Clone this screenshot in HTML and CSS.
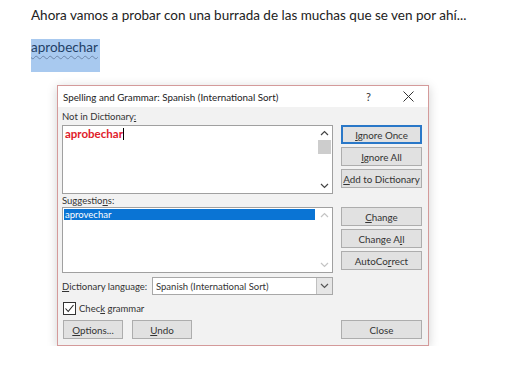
FILE: index.html
```html
<!DOCTYPE html>
<html lang="es">
<head>
    <meta charset="UTF-8">
    <title>Spelling and Grammar</title>
    <link rel="stylesheet" href="styles.css">
</head>
<body>
    <div class="doc">
        <p class="line">Ahora vamos a probar con una burrada de las muchas que se ven por ahí...</p>
        <p class="selected"><span class="misspelled">aprobechar</span></p>
    </div>

    <div class="dialog">
        <div class="titlebar">
            <span class="title">Spelling and Grammar: Spanish (International Sort)</span>
            <span class="help">?</span>
            <span class="close-x">
                <svg width="11" height="11" viewBox="0 0 11 11"><path d="M0.5 0.5 L10.5 10.5 M10.5 0.5 L0.5 10.5" stroke="#333" stroke-width="1" fill="none"/></svg>
            </span>
        </div>

        <div class="body">
            <div class="label first">Not in Dictionary<u>:</u></div>
            <div></div>

            <div class="textbox">
                <div class="content"><span class="bad">aprobechar</span><span class="caret"></span></div>
                <div class="scroll">
                    <svg class="arrow" width="9" height="6" viewBox="0 0 9 6"><path d="M1 5 L4.5 1.5 L8 5" stroke="#444" stroke-width="1.2" fill="none"/></svg>
                    <div class="thumb"></div>
                    <div class="track"></div>
                    <svg class="arrow" width="9" height="6" viewBox="0 0 9 6"><path d="M1 1 L4.5 4.5 L8 1" stroke="#444" stroke-width="1.2" fill="none"/></svg>
                </div>
            </div>
            <div class="stack">
                <button class="btn default"><u>I</u>gnore Once</button>
                <button class="btn"><u>I</u>gnore All</button>
                <button class="btn"><u>A</u>dd to Dictionary</button>
            </div>

            <div class="label">Suggestio<u>n</u>s:</div>
            <div></div>

            <div class="listbox">
                <div class="content">
                    <div class="item active">aprovechar</div>
                </div>
                <div class="scroll">
                    <svg class="arrow" width="9" height="6" viewBox="0 0 9 6"><path d="M1 5 L4.5 1.5 L8 5" stroke="#c4c4c4" stroke-width="1.2" fill="none"/></svg>
                    <div class="track"></div>
                    <svg class="arrow" width="9" height="6" viewBox="0 0 9 6"><path d="M1 1 L4.5 4.5 L8 1" stroke="#c4c4c4" stroke-width="1.2" fill="none"/></svg>
                </div>
            </div>
            <div class="stack">
                <button class="btn"><u>C</u>hange</button>
                <button class="btn">Change A<u>l</u>l</button>
                <button class="btn">AutoCo<u>r</u>rect</button>
            </div>

            <div class="langrow">
                <span class="langlabel"><u>D</u>ictionary language:</span>
                <div class="select">
                    <span class="value">Spanish (International Sort)</span>
                    <span class="drop">
                        <svg width="9" height="6" viewBox="0 0 9 6"><path d="M1 1 L4.5 4.5 L8 1" stroke="#555" stroke-width="1.2" fill="none"/></svg>
                    </span>
                </div>
            </div>
            <div></div>

            <div class="checkrow">
                <span class="checkbox">
                    <svg width="11" height="11" viewBox="0 0 11 11"><path d="M1.5 5.5 L4.2 8.5 L9.5 2" stroke="#222" stroke-width="1.1" fill="none"/></svg>
                </span>
                <span>Chec<u>k</u> grammar</span>
            </div>
            <div></div>

            <div class="bottomrow">
                <button class="btn small"><u>O</u>ptions...</button>
                <button class="btn small"><u>U</u>ndo</button>
            </div>
            <div class="stack bottom">
                <button class="btn">Close</button>
            </div>
        </div>
    </div>
</body>
</html>
```

FILE: styles.css
```css
body {
    margin: 0;
    background: #ffffff;
    font-family: Lato, "Open Sans", sans-serif;
}
.doc {
    padding: 6px 0 0 31px;
    font-size: 13.5px;
    color: #222;
}
.doc p {
    margin: 0;
}
.line {
    height: 19px;
    line-height: 19px;
}
.selected {
    margin-top: 14px !important;
    display: inline-block;
    background: #a8c9ef;
    height: 33px;
    width: 69px;
    line-height: 17px;
    white-space: nowrap;
}
.misspelled {
    color: #1f3f66;
    text-decoration: underline wavy #6d86aa;
    text-decoration-thickness: 1px;
    text-underline-offset: 3px;
}

.dialog {
    margin: 13px 0 0 57px;
    width: 370px;
    border: 1px solid #d49a9a;
    background: #f2f2f2;
    box-shadow: 0 2px 10px rgba(0, 0, 0, 0.18);
    font-size: 9.5px;
    color: #333;
    white-space: nowrap;
}
.titlebar {
    height: 21px;
    background: #fff;
    display: flex;
    align-items: center;
    padding-left: 5px;
}
.title {
    flex: 1;
    font-size: 9.8px;
    color: #222;
}
.help {
    width: 37px;
    font-size: 11px;
}
.close-x {
    width: 25px;
    display: flex;
}
.body {
    display: grid;
    grid-template-columns: 271px 81px;
    column-gap: 8px;
    padding: 0 0 6px 4px;
}
.label {
    height: 12px;
    line-height: 12px;
    margin-top: 1px;
    margin-bottom: 0;
}
.label.first {
    margin-top: 4px;
    margin-bottom: 2px;
}
.textbox,
.listbox {
    background: #fff;
    border: 1px solid #a0a0a0;
    display: flex;
}
.textbox {
    height: 67px;
}
.listbox {
    height: 64px;
}
.content {
    flex: 1;
    padding: 1px 2px;
}
.bad {
    color: #e0202a;
    font-weight: bold;
    font-size: 11.5px;
}
.caret {
    display: inline-block;
    width: 1px;
    height: 12px;
    background: #000;
    vertical-align: -2px;
}
.scroll {
    width: 15px;
    display: flex;
    flex-direction: column;
    align-items: center;
    background: #fff;
}
.arrow {
    margin: 4px 0;
}
.thumb {
    width: 13px;
    height: 14px;
    background: #cdcdcd;
}
.track {
    flex: 1;
}
.item {
    height: 11px;
    line-height: 11px;
    margin-left: -1px;
    padding-left: 1px;
}
.item.active {
    background: #0a74d4;
    color: #fff;
}
.stack {
    display: flex;
    flex-direction: column;
    gap: 3px;
}
.btn {
    height: 19px;
    background: #e1e1e1;
    border: 1px solid #adadad;
    font-family: Lato, "Open Sans", sans-serif;
    font-size: 9.8px;
    color: #333;
    padding: 0;
    white-space: nowrap;
}
.btn.default {
    border: 2px solid #2a78c8;
}
.langrow {
    display: flex;
    align-items: center;
    margin-top: 4px;
    height: 18px;
}
.langlabel {
    width: 90px;
}
.select {
    flex: 1;
    height: 16px;
    border: 1px solid #a8a8a8;
    background: #fff;
    display: flex;
    align-items: center;
}
.select .value {
    flex: 1;
    padding-left: 3px;
}
.drop {
    width: 15px;
    height: 16px;
    background: #e6e6e6;
    border-left: 1px solid #c0c0c0;
    display: flex;
    align-items: center;
    justify-content: center;
}
.checkrow {
    display: flex;
    align-items: center;
    gap: 3px;
    margin-top: 6px;
    height: 14px;
    padding-left: 1px;
}
.checkbox {
    width: 11px;
    height: 11px;
    border: 1px solid #333;
    background: #fff;
    display: flex;
}
.bottomrow {
    display: flex;
    gap: 9px;
    margin-top: 5px;
    padding-left: 1px;
}
.stack.bottom {
    margin-top: 5px;
}
.btn.small {
    width: 60px;
}
```
